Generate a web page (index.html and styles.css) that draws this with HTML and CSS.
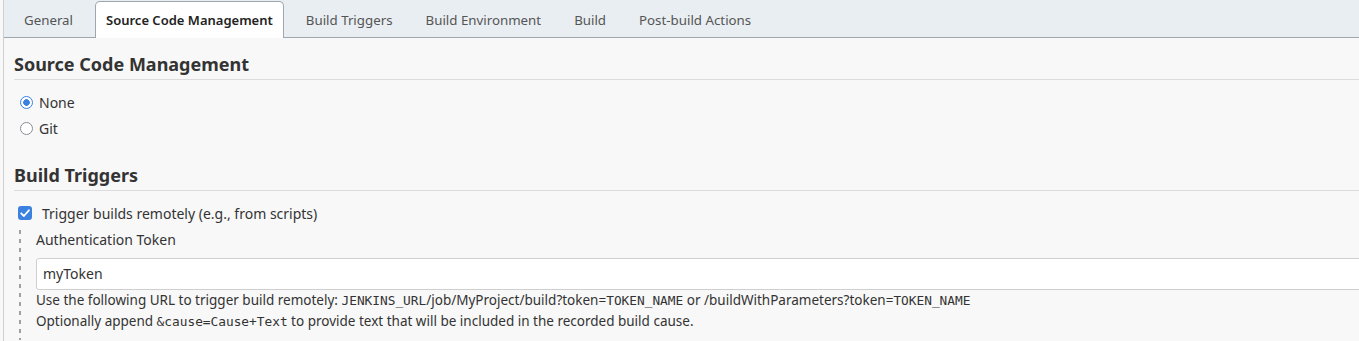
FILE: index.html
```html
<!DOCTYPE html>
<html>
<head>
<meta charset="utf-8">
<link rel="stylesheet" href="styles.css">
</head>
<body>
<div class="page">
  <div class="tabbar">
    <div class="tab">General</div>
    <div class="tab active">Source Code Management</div>
    <div class="tab">Build Triggers</div>
    <div class="tab">Build Environment</div>
    <div class="tab">Build</div>
    <div class="tab">Post-build Actions</div>
  </div>
  <div class="content">
    <section class="section">
      <h2 class="section-title">Source Code Management</h2>
      <div class="radios">
        <label class="radio-row"><span class="radio checked"></span><span>None</span></label>
        <label class="radio-row"><span class="radio"></span><span>Git</span></label>
      </div>
    </section>
    <section class="section">
      <h2 class="section-title">Build Triggers</h2>
      <label class="check-row">
        <span class="checkbox"><svg viewBox="0 0 14 14" width="14" height="14"><path d="M3.2 7.3 L5.9 10 L10.9 4.3" fill="none" stroke="#fff" stroke-width="1.8" stroke-linecap="round" stroke-linejoin="round"/></svg></span>
        <span>Trigger builds remotely (e.g., from scripts)</span>
      </label>
      <div class="nested">
        <div class="field-label">Authentication Token</div>
        <div class="input">myToken</div>
        <div class="help">
          <div>Use the following URL to trigger build remotely: <code>JENKINS_URL</code>/job/MyProject/build?token=<code>TOKEN_NAME</code> or /buildWithParameters?token=<code>TOKEN_NAME</code></div>
          <div>Optionally append <code>&amp;cause=Cause+Text</code> to provide text that will be included in the recorded build cause.</div>
        </div>
      </div>
    </section>
  </div>
</div>
</body>
</html>
```

FILE: styles.css
```css
html, body {
  margin: 0;
  padding: 0;
  background: #f8f8f8;
}
body {
  font-family: "Noto Sans", "Open Sans", sans-serif;
  color: #333;
  font-size: 14px;
  overflow: hidden;
}
.page {
  margin-left: 3px;
  border-left: 1px solid #cfcfcf;
  min-height: 341px;
  width: 1400px;
}
.tabbar {
  display: flex;
  align-items: flex-end;
  gap: 11px;
  height: 37px;
  padding-left: 9px;
  background: #e9eef2;
  border-bottom: 1px solid #9ea6af;
}
.tab {
  height: 36px;
  line-height: 36px;
  padding: 0 10px;
  color: #555;
  font-size: 13.3px;
  white-space: nowrap;
  border: 1px solid transparent;
  border-bottom: none;
  margin-bottom: -1px;
}
.tab.active {
  background: #fff;
  color: #222;
  font-size: 13px;
  font-weight: 600;
  border-color: #9ea6af;
  border-radius: 5px 5px 0 0;
}
.content {
  padding: 0 0 0 10px;
}
.section-title {
  margin: 0;
  font-size: 18px;
  font-weight: 700;
  color: #333;
  padding: 15px 0 4px;
  border-bottom: 1px solid #dcdcdc;
  line-height: 22px;
}
.radios {
  display: flex;
  flex-direction: column;
  gap: 7px;
  padding: 13px 0 0 6px;
  margin-bottom: 11px;
}
.radio-row {
  display: flex;
  align-items: center;
  gap: 6px;
  height: 19px;
}
.radio {
  flex-shrink: 0;
  width: 13px;
  height: 13px;
  box-sizing: border-box;
  border: 1.6px solid #8c8c9a;
  border-radius: 50%;
  background: #fff;
  display: inline-block;
}
.radio.checked {
  border-color: #3b82e0;
  background: radial-gradient(circle, #3b82e0 0 3px, #fff 3.6px);
}
.check-row {
  display: flex;
  align-items: center;
  gap: 10px;
  margin: 13px 0 0 4px;
  height: 18px;
}
.checkbox {
  flex-shrink: 0;
  width: 14px;
  height: 14px;
  border-radius: 3px;
  background: #3b82e0;
  display: inline-flex;
}
.nested {
  margin: 8px 0 0 5px;
  padding-left: 17px;
  padding-bottom: 8px;
  background-image: repeating-linear-gradient(to bottom, #a0a0a0 0 4px, transparent 4px 9px);
  background-size: 2px 100%;
  background-repeat: no-repeat;
  background-position: left top;
}
.field-label {
  padding-top: 1px;
  line-height: 18px;
  color: #333;
}
.input {
  margin-top: 9px;
  height: 30px;
  line-height: 30px;
  background: #fff;
  border: 1px solid #cfcfcf;
  border-radius: 3px;
  padding-left: 6px;
  color: #333;
}
.help {
  font-size: 13.5px;
  line-height: 21px;
  color: #333;
}
.help code {
  font-family: "DejaVu Sans Mono", "Liberation Mono", monospace;
  font-size: 12.8px;
}
```
